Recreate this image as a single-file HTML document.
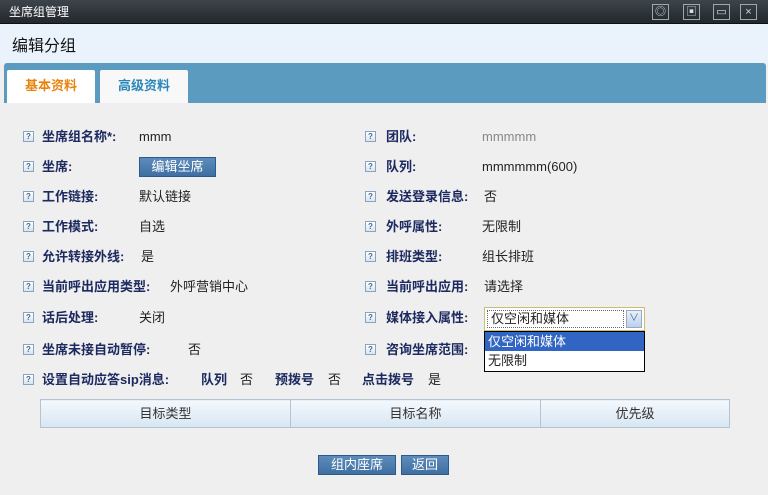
<!DOCTYPE html>
<html><head><meta charset="utf-8">
<style>
*{margin:0;padding:0;box-sizing:border-box}
body{width:768px;height:495px;overflow:hidden;background:#efefef;font-family:"Liberation Sans","Noto Sans CJK SC",sans-serif;font-size:13px;position:relative;color:#222}
.a{position:absolute;white-space:nowrap;line-height:16px}
.title{left:0;top:0;width:768px;height:24px;background:linear-gradient(#3d454b,#22282d);border-bottom:1px solid #111}
.title span{position:absolute;left:9px;top:4px;color:#fff;font-size:12px}
.wb{position:absolute;top:4px;width:17px;height:16px;border:1px solid #9aa;color:#ddd;font-size:11px;text-align:center;line-height:14px}
.head{left:0;top:24px;width:768px;height:39px;background:#eaf3fc}
.head span{position:absolute;left:12px;top:15px;font-size:16px;color:#111}
.tabbar{left:4px;top:63px;width:762px;height:40px;background:#5a9bbf;border-radius:3px 3px 0 0}
.tab{position:absolute;top:70px;height:33px;background:#fff;font-weight:bold;font-size:13px;text-align:center;line-height:32px;border-radius:2px 2px 0 0}
.ic{position:absolute;width:11px;height:11px;border:1px solid #8aa4bf;background:linear-gradient(#fff,#d8e4f0);color:#4a6a90;font-size:8px;line-height:9px;text-align:center;font-weight:bold}
.l{font-weight:bold;color:#1c2a60;font-size:13px}
.v{color:#222;font-size:13px}
th{background:linear-gradient(#f4f8fc,#d7e6f2);font-weight:normal;color:#333;border:1px solid #b3c3d3;height:28px;font-size:13px}
.btn{position:absolute;background:linear-gradient(#5d8cbc,#3f6fa2);color:#fff;font-size:13px;text-align:center;border:1px solid #2d5a8a}
</style></head><body>
<div class="a title"><span>坐席组管理</span>
<div class="wb" style="left:652px">◎</div><div class="wb" style="left:683px">▣</div><div class="wb" style="left:713px">▭</div><div class="wb" style="left:740px">×</div></div>
<div class="a head"><span>编辑分组</span></div>
<div class="a tabbar"></div>
<div class="tab" style="left:7px;width:88px;color:#e8830c">基本资料</div>
<div class="tab" style="left:100px;width:88px;color:#2a86b8;background:#f8f8f8">高级资料</div>

<div class="ic" style="left:23px;top:131px">?</div><div class="a l" style="left:42px;top:129px">坐席组名称*:</div><div class="a v" style="left:139px;top:129px">mmm</div>
<div class="ic" style="left:23px;top:161px">?</div><div class="a l" style="left:42px;top:159px">坐席:</div>
<div class="btn" style="left:139px;top:157px;width:77px;height:20px;line-height:18px">编辑坐席</div>
<div class="ic" style="left:23px;top:191px">?</div><div class="a l" style="left:42px;top:189px">工作链接:</div><div class="a v" style="left:139px;top:189px">默认链接</div>
<div class="ic" style="left:23px;top:221px">?</div><div class="a l" style="left:42px;top:219px">工作模式:</div><div class="a v" style="left:139px;top:219px">自选</div>
<div class="ic" style="left:23px;top:251px">?</div><div class="a l" style="left:42px;top:249px">允许转接外线:</div><div class="a v" style="left:141px;top:249px">是</div>
<div class="ic" style="left:23px;top:281px">?</div><div class="a l" style="left:42px;top:279px">当前呼出应用类型:</div><div class="a v" style="left:170px;top:279px">外呼营销中心</div>
<div class="ic" style="left:23px;top:312px">?</div><div class="a l" style="left:42px;top:310px">话后处理:</div><div class="a v" style="left:139px;top:310px">关闭</div>
<div class="ic" style="left:23px;top:344px">?</div><div class="a l" style="left:42px;top:342px">坐席未接自动暂停:</div><div class="a v" style="left:188px;top:342px">否</div>
<div class="ic" style="left:23px;top:374px">?</div><div class="a l" style="left:42px;top:372px">设置自动应答sip消息:</div>
<div class="a l" style="left:201px;top:372px">队列</div><div class="a v" style="left:240px;top:372px">否</div>
<div class="a l" style="left:275px;top:372px">预拨号</div><div class="a v" style="left:328px;top:372px">否</div>
<div class="a l" style="left:362px;top:372px">点击拨号</div><div class="a v" style="left:428px;top:372px">是</div>

<div class="ic" style="left:365px;top:131px">?</div><div class="a l" style="left:386px;top:129px">团队:</div><div class="a" style="left:482px;top:129px;color:#888">mmmmm</div>
<div class="ic" style="left:365px;top:161px">?</div><div class="a l" style="left:386px;top:159px">队列:</div><div class="a v" style="left:482px;top:159px">mmmmmm(600)</div>
<div class="ic" style="left:365px;top:191px">?</div><div class="a l" style="left:386px;top:189px">发送登录信息:</div><div class="a v" style="left:484px;top:189px">否</div>
<div class="ic" style="left:365px;top:221px">?</div><div class="a l" style="left:386px;top:219px">外呼属性:</div><div class="a v" style="left:482px;top:219px">无限制</div>
<div class="ic" style="left:365px;top:251px">?</div><div class="a l" style="left:386px;top:249px">排班类型:</div><div class="a v" style="left:482px;top:249px">组长排班</div>
<div class="ic" style="left:365px;top:281px">?</div><div class="a l" style="left:386px;top:279px">当前呼出应用:</div><div class="a v" style="left:484px;top:279px">请选择</div>
<div class="ic" style="left:365px;top:312px">?</div><div class="a l" style="left:386px;top:310px">媒体接入属性:</div>
<div class="ic" style="left:365px;top:344px">?</div><div class="a l" style="left:386px;top:342px">咨询坐席范围:</div>

<div class="a" style="left:484px;top:307px;width:161px;height:24px;border:1px solid #c8c070;background:#fff">
<div class="a" style="left:2px;top:2px;width:137px;height:18px;border:1px dotted #666;font-size:13px;line-height:16px;padding-left:3px">仅空闲和媒体</div>
<div class="a" style="left:141px;top:2px;width:16px;height:18px;background:linear-gradient(#e8f0fb,#bcd0ee);border:1px solid #9ab;color:#4a6a9a;font-size:10px;text-align:center;line-height:16px">∨</div></div>
<div class="a" style="left:484px;top:331px;width:161px;height:41px;border:1px solid #000;background:#fff;font-size:13px">
<div style="background:#3165c4;color:#fff;height:19px;line-height:19px;padding-left:3px">仅空闲和媒体</div>
<div style="height:20px;line-height:20px;padding-left:3px">无限制</div></div>

<table class="a" style="left:40px;top:399px;width:690px;border-collapse:collapse">
<tr><th style="width:250px">目标类型</th><th style="width:250px">目标名称</th><th>优先级</th></tr></table>

<div class="btn" style="left:318px;top:455px;width:78px;height:20px;line-height:18px">组内座席</div>
<div class="btn" style="left:401px;top:455px;width:48px;height:20px;line-height:18px">返回</div>
</body></html>
